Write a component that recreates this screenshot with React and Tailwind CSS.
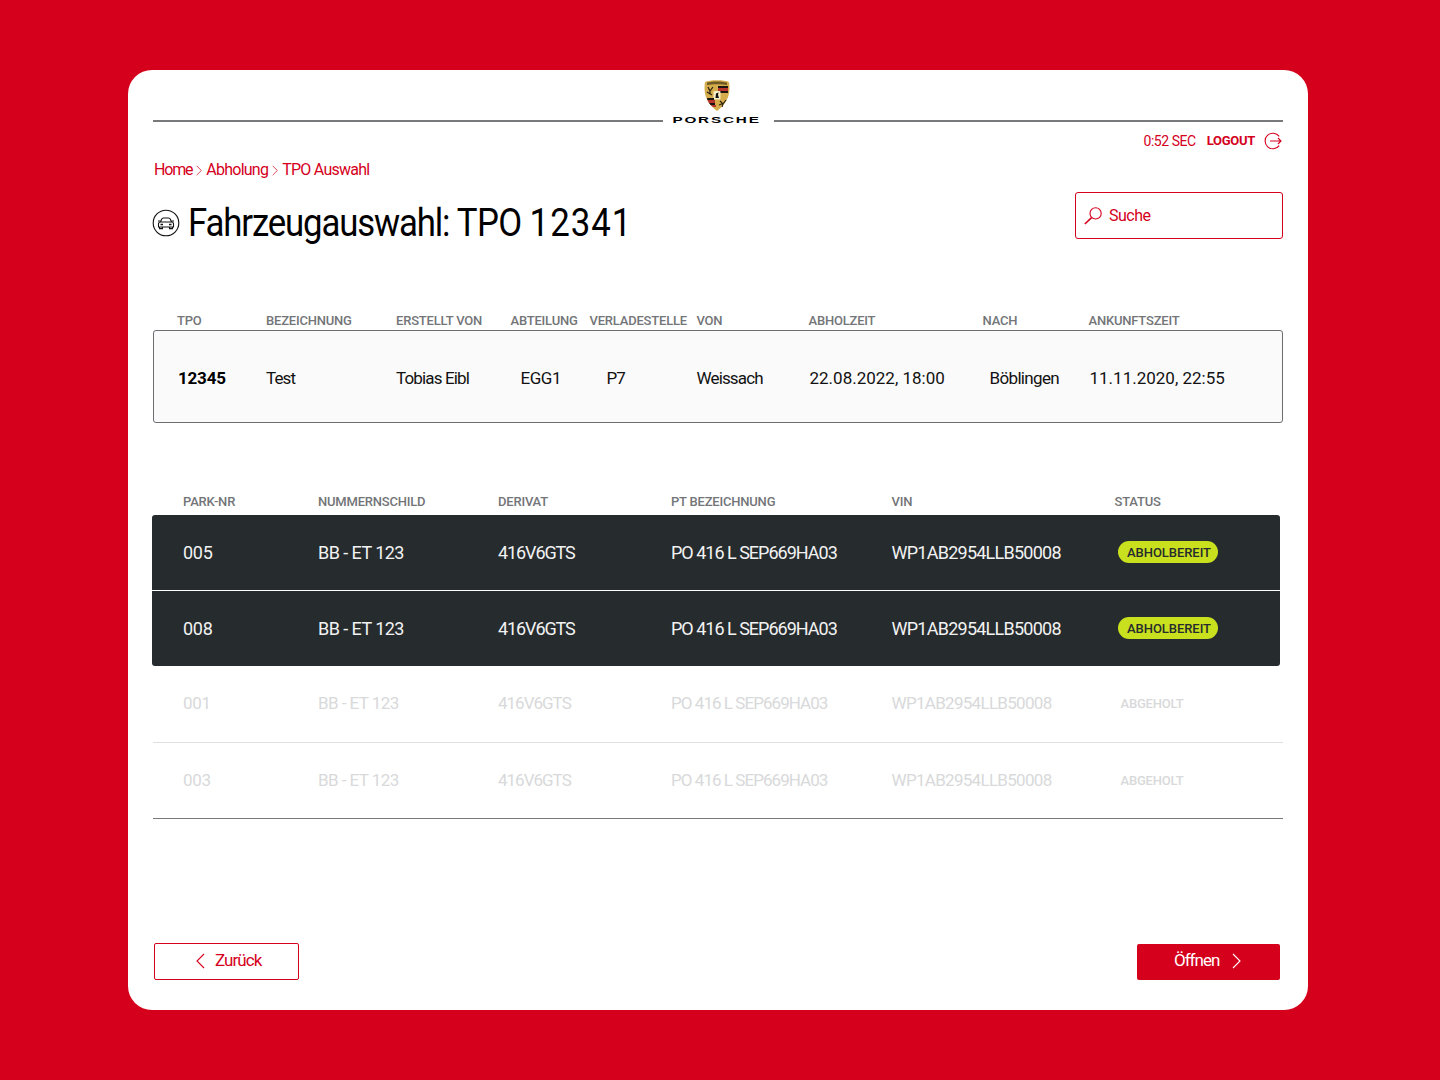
import React from "react";

const FONT = "font-['Roboto','Liberation_Sans',sans-serif]";

const COLS_TPO = "grid-cols-[113px_130px_114.5px_79px_107px_112px_174px_106px_1fr]";
const COLS_VEH = "grid-cols-[165px_180px_173px_220.5px_223px_1fr]";

const tpoHeaders = [
  ["TPO", "pl-[24px]"],
  ["BEZEICHNUNG", ""],
  ["ERSTELLT VON", ""],
  ["ABTEILUNG", ""],
  ["VERLADESTELLE", ""],
  ["VON", ""],
  ["ABHOLZEIT", ""],
  ["NACH", ""],
  ["ANKUNFTSZEIT", ""],
];

const tpoValues = [
  ["12345", "pl-[24px] font-bold text-black tracking-[-0.2px]"],
  ["Test", "tracking-[-0.9px]"],
  ["Tobias Eibl", "tracking-[-0.85px]"],
  ["EGG1", "pl-[10px] tracking-[-0.45px]"],
  ["P7", "pl-[17px] tracking-[-0.9px]"],
  ["Weissach", "tracking-[-0.85px]"],
  ["22.08.2022, 18:00", "pl-px tracking-[0px]"],
  ["Böblingen", "pl-[7px] tracking-[-0.65px]"],
  ["11.11.2020, 22:55", "pl-px tracking-[0px]"],
];

const vehicleHeaders = ["PARK-NR", "NUMMERNSCHILD", "DERIVAT", "PT BEZEICHNUNG", "VIN", "STATUS"];

const readyRows = ["005", "008"];
const doneRows = ["001", "003"];

function Crest() {
  return (
    <svg width="26" height="32" viewBox="0 0 26 32">
      <path d="M1 3 C5 0.5 21 0.5 25 3 C26.5 13 25 23 13 32 C1 23 -0.5 13 1 3Z" fill="#d6ad4c" />
      <path d="M3 3.5 C8 2 18 2 23 3.5 L23 6 C18 5 8 5 3 6Z" fill="#6e5a24" />
      <path d="M14 7 H24 V9 H14Z M14 12 H24 V14 H14Z" fill="#1a1512" />
      <path d="M14 9 H24 V12 H14Z" fill="#b8332a" />
      <path d="M4 8 L6 12 L9 8 M6 12 L6 15 M3 13 L8 16" stroke="#2a2010" strokeWidth="1.2" fill="none" />
      <rect x="9.5" y="12" width="7" height="8.5" rx="1" fill="#f4ecc4" />
      <path d="M11.5 19 L12 14.5 L14.5 13.5 L14 16 L15 19Z" fill="#111" />
      <path d="M3 19 H10 V21 H3.4Z M5 24 H11 V26 H6.5Z" fill="#1a1512" />
      <path d="M3.4 21 H11 V24 H5Z" fill="#b8332a" />
      <path d="M6.5 26 H12 V28 H9Z" fill="#b8332a" />
      <path d="M16 22 L19 25 L22 21 M19 25 L18 28 M15 26 L20 24" stroke="#2a2010" strokeWidth="1.1" fill="none" />
    </svg>
  );
}

function Chevron({ dir = "right", className = "" }) {
  return (
    <svg width="9" height="16" viewBox="0 0 9 16" fill="none" stroke="currentColor" strokeWidth="1.1" className={className}>
      <path d={dir === "right" ? "M1 1 L8 8 L1 15" : "M8 1 L1 8 L8 15"} />
    </svg>
  );
}

function CarBadge() {
  return (
    <svg width="28" height="28" viewBox="0 0 28 28" fill="none" stroke="#111" strokeWidth="1.1">
      <circle cx="14" cy="14" r="12.8" />
      <path d="M8.5 13 L9.6 10.2 C10 9.3 10.6 9 11.4 9 H16.6 C17.4 9 18 9.3 18.4 10.2 L19.5 13" />
      <path d="M6.5 15 C6.5 13.8 7.2 13 8.5 13 H19.5 C20.8 13 21.5 13.8 21.5 15 V18 H6.5 Z" />
      <path d="M7.5 18 V19.6 H10.5 V18 M17.5 18 V19.6 H20.5 V18" />
      <path d="M8.5 15.5 H11 M17 15.5 H19.5" strokeWidth="1.5" />
      <path d="M8.5 12 H6 M19.5 12 H22" />
    </svg>
  );
}

function SearchIcon() {
  return (
    <svg width="18" height="18" viewBox="0 0 18 18" fill="none" stroke="#d5001c" strokeWidth="1.1">
      <circle cx="11.6" cy="6.4" r="5.6" />
      <path d="M7.6 10.6 L0.8 17" strokeWidth="1.6" />
    </svg>
  );
}

function LogoutIcon() {
  return (
    <svg width="18" height="18" viewBox="0 0 18 18" fill="none" stroke="#d5001c" strokeWidth="1.1">
      <path d="M15.2 4.4 A7.8 7.8 0 1 0 15.2 13.6" />
      <path d="M6 9 H17 M14 6 L17 9 L14 12" />
    </svg>
  );
}

export default function App() {
  return (
    <div className={`${FONT} min-h-[1080px] bg-[#d5001c] pt-[70px]`}>
      <div className="ml-[128px] flex h-[940px] w-[1180px] flex-col rounded-[24px] bg-white px-[25px]">
        {/* Logo header */}
        <div className="flex h-[56px] items-start">
          <div className="mt-[50px] h-[2px] flex-1 bg-[#77797b]" />
          <div className="flex w-[111px] flex-col items-center pt-[9px] pr-[2px]">
            <Crest />
            <span className="mt-[5px] whitespace-nowrap font-['Liberation_Sans',sans-serif] text-[8.5px] leading-[9px] font-bold tracking-[1px] text-black scale-x-[1.8]">PORSCHE</span>
          </div>
          <div className="mt-[50px] h-[2px] flex-1 bg-[#77797b]" />
        </div>

        {/* Session */}
        <div className="mt-[6px] flex h-[18px] items-center justify-end gap-[11px] pr-px text-[#d5001c]">
          <span className="text-[14px] tracking-[-0.45px]">0:52 SEC</span>
          <span className="text-[13px] font-bold tracking-[-0.3px]">LOGOUT</span>
          <span className="-ml-[2px]"><LogoutIcon /></span>
        </div>

        {/* Breadcrumb */}
        <div className="mt-[10px] flex h-[20px] items-center pl-px text-[16px] tracking-[-0.75px] text-[#d5001c]">
          <span className="tracking-[-1.2px]">Home</span>
          <Chevron className="mx-[4px] h-[11px] w-[6px]" />
          <span>Abholung</span>
          <Chevron className="mx-[4px] h-[11px] w-[6px]" />
          <span>TPO Auswahl</span>
        </div>

        {/* Title + search */}
        <div className="mt-[12px] flex h-[47px] items-start justify-between">
          <div className="-ml-px flex h-[62px] items-center">
            <CarBadge />
            <h1 className="ml-[8px] origin-left scale-x-[0.915] whitespace-nowrap text-[38px] leading-[46px] font-normal tracking-[-0.65px] text-black">
              <span className="tracking-[-1.25px]">Fahrzeugauswahl:</span> TPO <span className="tracking-[1.1px]">12341</span>
            </h1>
          </div>
          <div className="flex h-[47px] w-[208px] items-center rounded-[3px] border border-[#d5001c] pl-[8px] text-[#d5001c]">
            <SearchIcon />
            <span className="ml-[7px] text-[16px] tracking-[-0.5px]">Suche</span>
          </div>
        </div>

        {/* TPO table */}
        <div className={`mt-[72px] grid h-[16px] ${COLS_TPO} items-center text-[13px] font-medium tracking-[-0.2px] text-[#737578]`}>
          {tpoHeaders.map(([label, extra]) => (
            <div key={label} className={`whitespace-nowrap ${extra}`}>{label}</div>
          ))}
        </div>
        <div className="mt-[3px] grid h-[93px] grid-cols-[112px_130px_114.5px_79px_107px_112px_174px_106px_1fr] items-center rounded-[3px] border border-[#6b6d70] bg-[#fafafa] pt-[4px] text-[17px] text-[#111]">
          {tpoValues.map(([value, extra]) => (
            <div key={value} className={`whitespace-nowrap ${extra}`}>{value}</div>
          ))}
        </div>

        {/* Vehicle table */}
        <div className={`mt-[69px] grid h-[16px] ${COLS_VEH} items-center text-[13px] font-medium tracking-[-0.2px] text-[#737578]`}>
          {vehicleHeaders.map((label, i) => (
            <div key={label} className={`whitespace-nowrap ${i === 0 ? "pl-[30px]" : ""}`}>{label}</div>
          ))}
        </div>
        <div className="mt-[7px] w-[1128px] -translate-x-px divide-y divide-white overflow-hidden rounded-[3px] bg-[#262b2e]">
          {readyRows.map((nr) => (
            <div key={nr} className={`grid h-[75.5px] ${COLS_VEH} items-center text-[18px] text-[#f2f2f2]`}>
              <div className="pl-[31px] tracking-[-0.25px]">{nr}</div>
              <div className="pl-px tracking-[-0.55px]">BB - ET 123</div>
              <div className="pl-px tracking-[-1.1px]">416V6GTS</div>
              <div className="pl-px whitespace-nowrap tracking-[-1px]">PO 416 L SEP669HA03</div>
              <div className="pl-px tracking-[-0.75px]">WP1AB2954LLB50008</div>
              <div className="flex pl-[4px]">
                <span className="inline-flex h-[22px] w-[100px] items-center justify-center rounded-full bg-[#c9e01e] pl-[3px] text-[13px] font-medium tracking-[-0.05px] text-[#262b2e]">ABHOLBEREIT</span>
              </div>
            </div>
          ))}
        </div>
        <div className="border-b border-[#77797b]">
          {doneRows.map((nr, i) => (
            <div key={nr} className={`grid ${i === 0 ? "h-[77px] border-b border-[#dedfe0]" : "h-[75px]"} ${COLS_VEH} items-center text-[17px] text-[#d8d9da]`}>
              <div className="pl-[30px] tracking-[-0.25px]">{nr}</div>
              <div className="tracking-[-0.55px]">BB - ET 123</div>
              <div className="tracking-[-1px]">416V6GTS</div>
              <div className="whitespace-nowrap tracking-[-0.95px]">PO 416 L SEP669HA03</div>
              <div className="tracking-[-0.7px]">WP1AB2954LLB50008</div>
              <div className="pl-[6px] text-[13px] font-medium tracking-[-0.2px]">ABGEHOLT</div>
            </div>
          ))}
        </div>

        {/* Actions */}
        <div className="mt-auto mb-[30px] flex items-center justify-between pr-[3px] pl-px">
          <button className="flex h-[37px] w-[145px] items-center gap-[10px] rounded-[2px] border border-[#d5001c] pb-[2px] pl-[41px] text-[17px] tracking-[-0.95px] text-[#d5001c]">
            <Chevron dir="left" />
            <span>Zurück</span>
          </button>
          <button className="flex h-[36px] w-[143px] items-center gap-[13px] rounded-[2px] bg-[#d5001c] pb-[2px] pl-[37px] text-[17px] tracking-[-1px] text-white">
            <span>Öffnen</span>
            <Chevron />
          </button>
        </div>
      </div>
    </div>
  );
}
